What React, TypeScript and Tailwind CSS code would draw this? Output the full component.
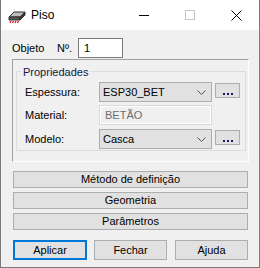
import React from "react";

const font = "font-['Liberation_Sans',Arial,sans-serif] text-[11px] text-black";

const SlabIcon = () => (
    <svg width="18" height="16" viewBox="0 0 18 16">
        <polygon points="1,8 6,3 17,3 12,8" fill="#bdbdbd" stroke="#2e2e2e" strokeWidth="1"/>
        <polygon points="1,8 12,8 12,11 1,11" fill="#5a5a5a" stroke="#2e2e2e" strokeWidth="1"/>
        <polygon points="12,8 17,3 17,6 12,11" fill="#3a3a3a" stroke="#2e2e2e" strokeWidth="1"/>
        <path d="M3 12 l-1 2 M5.5 12 l-1 2 M8 12 l-1 2 M10.5 12 l-1 2" stroke="#e01010" strokeWidth="1.2"/>
    </svg>
);

const Chevron = () => (
    <svg width="9" height="5" viewBox="0 0 9 5" className="mr-[5px]">
        <polyline points="0.5,0.5 4.5,4.5 8.5,0.5" fill="none" stroke="#555" strokeWidth="1"/>
    </svg>
);

const Combo = ({value}: {value: string}) => (
    <div className="w-[113px] h-[20px] bg-[#e1e1e1] border border-[#adadad] flex items-center justify-between pl-[3px]">
        <span>{value}</span>
        <Chevron/>
    </div>
);

const DotsButton = () => (
    <div className="ml-[3px] mt-[1px] w-[25px] h-[15px] bg-[#e1e1e1] border border-[#adadad] flex items-end justify-center gap-[2px] pb-[2px]">
        <div className="w-[2px] h-[2px] bg-[#1a1a5a]"/>
        <div className="w-[2px] h-[2px] bg-[#1a1a5a]"/>
        <div className="w-[2px] h-[2px] bg-[#1a1a5a]"/>
    </div>
);

const WideButton = ({label}: {label: string}) => (
    <div className="mt-[4px] ml-[12px] w-[235px] h-[17px] bg-[#e1e1e1] border border-[#adadad] flex items-center justify-center">
        {label}
    </div>
);

const App = () => {
    return (
        <div className={`w-[260px] h-[268px] flex flex-col border-x border-b border-[#7a7a7a] bg-[#f0f0f0] ${font}`}>
            {/* title bar */}
            <div className="h-[30px] bg-white flex items-center shrink-0">
                <div className="ml-[7px] mt-[3px]">
                    <SlabIcon/>
                </div>
                <span className="ml-[5px] text-[12px]">Piso</span>
                <div className="ml-auto flex h-full">
                    <div className="w-[46px] h-full flex items-center justify-center">
                        <div className="w-[10px] h-px bg-black"/>
                    </div>
                    <div className="w-[46px] h-full flex items-center justify-center">
                        <div className="w-[10px] h-[10px] border border-[#c6c6c6]"/>
                    </div>
                    <div className="w-[46px] h-full flex items-center justify-center">
                        <svg width="11" height="11" viewBox="0 0 11 11">
                            <path d="M0.5 0.5 L10.5 10.5 M10.5 0.5 L0.5 10.5" stroke="#000" strokeWidth="1"/>
                        </svg>
                    </div>
                </div>
            </div>

            {/* Objeto */}
            <div className="mt-[8px] pl-[11px] flex items-center h-[20px]">
                <span className="w-[45px]">Objeto</span>
                <span className="w-[21px]">Nº.</span>
                <div className="w-[45px] h-[20px] bg-white border border-[#7a7a7a] flex items-center pl-[5px]">1</div>
            </div>

            {/* sunken frame */}
            <div className="mt-[1px] ml-[11px] w-[237px] h-[103px] border-t border-l border-[#a0a0a0] border-b border-r border-b-white border-r-white">
                <div className="relative mt-[11px] ml-[3px] w-[230px] h-[80px] border border-[#dcdcdc]">
                    <span className="absolute -top-[8px] left-[4px] px-[2px] bg-[#f0f0f0] text-[#0c1a4a]">Propriedades</span>

                    <div className="mt-[10px] pl-[8px] flex items-start">
                        <span className="w-[74px] h-[20px] flex items-center">Espessura:</span>
                        <Combo value="ESP30_BET"/>
                        <DotsButton/>
                    </div>

                    <div className="mt-[3px] pl-[8px] flex items-start">
                        <span className="w-[74px] h-[20px] flex items-center">Material:</span>
                        <div className="w-[113px] h-[20px] bg-[#f0f0f0] border border-[#d9d9d9] shadow-[inset_0_0_0_1px_#ffffff] flex items-center pl-[5px] text-[#6d6d6d]">
                            BETÃO
                        </div>
                    </div>

                    <div className="mt-[4px] pl-[8px] flex items-start">
                        <span className="w-[74px] h-[20px] flex items-center">Modelo:</span>
                        <Combo value="Casca"/>
                        <DotsButton/>
                    </div>
                </div>
            </div>

            <div className="mt-[5px]">
                <WideButton label="Método de definição"/>
                <WideButton label="Geometria"/>
                <WideButton label="Parâmetros"/>
            </div>

            <div className="mt-[10px] ml-[12px] flex">
                <div className="w-[74px] h-[20px] bg-[#e1e1e1] border-2 border-[#0078d7] flex items-center justify-center">Aplicar</div>
                <div className="ml-[7px] w-[73px] h-[20px] bg-[#e1e1e1] border border-[#adadad] flex items-center justify-center">Fechar</div>
                <div className="ml-[8px] w-[73px] h-[20px] bg-[#e1e1e1] border border-[#adadad] flex items-center justify-center">Ajuda</div>
            </div>
        </div>
    );
};

export default App;
